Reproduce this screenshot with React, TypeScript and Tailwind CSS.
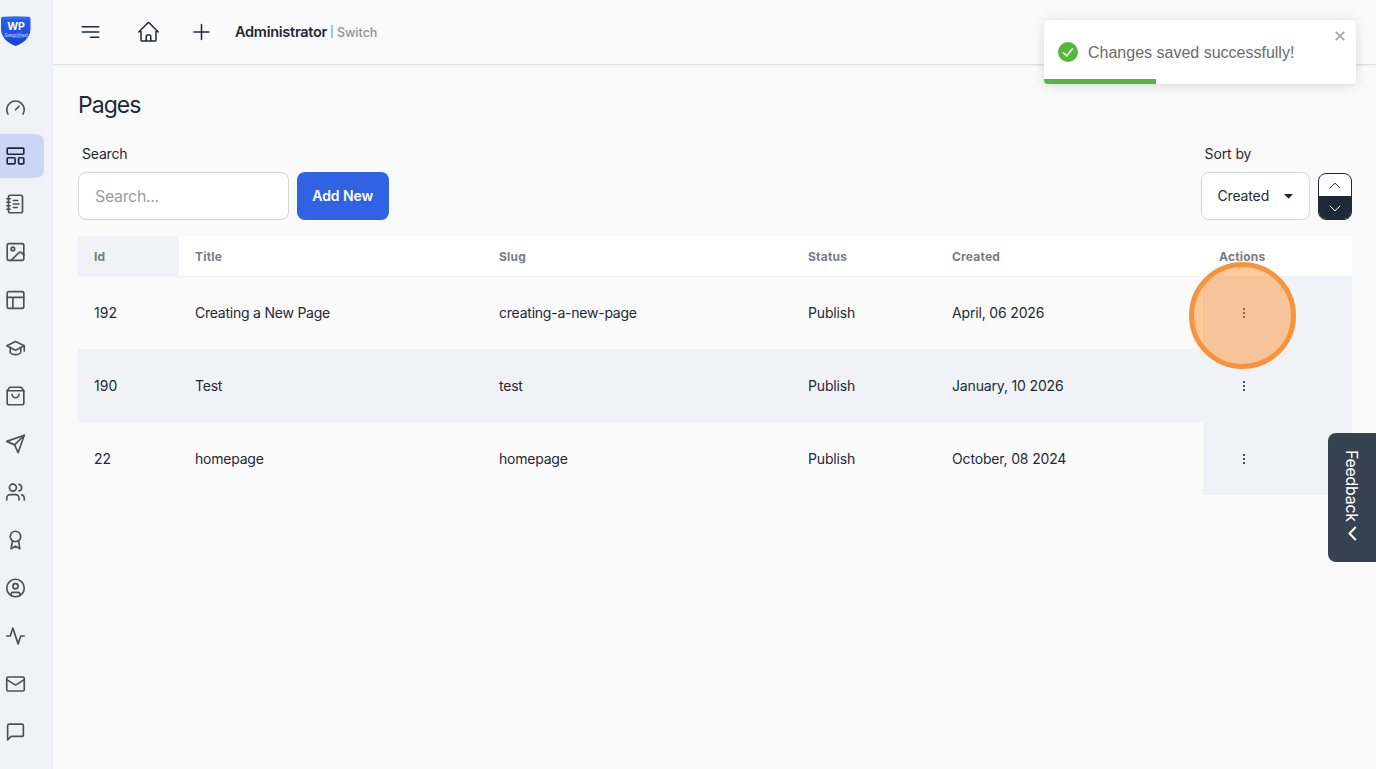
import type { ReactNode } from "react";

const navIcons: ReactNode[] = [
  <>
    <path d="m12 14 4-4" />
    <path d="M3.34 19a10 10 0 1 1 17.32 0" />
  </>,
  <>
    <rect x="2.5" y="3" width="19" height="7" rx="1" />
    <rect x="2.5" y="14" width="9" height="7" rx="1" />
    <rect x="15.5" y="14" width="6" height="7" rx="1" />
  </>,
  <>
    <path d="M2 6h4M2 10h4M2 14h4M2 18h4" />
    <rect x="4" y="2" width="16" height="20" rx="2" />
    <path d="M9.5 8h5M9.5 12H16M9.5 16H14" />
  </>,
  <>
    <rect x="2.5" y="2.5" width="19" height="19" rx="2" />
    <circle cx="9" cy="8.5" r="2" />
    <path d="m21.5 15.5-2.6-2.8a2 2 0 0 0-3 0L7 21.5" />
  </>,
  <>
    <rect x="2.5" y="2.5" width="19" height="19" rx="2" />
    <path d="M2.5 9h19M9 21.5V9" />
  </>,
  <>
    <path d="M12 4.5 2 9.5l10 5 10-5-10-5Z" />
    <path d="M22 9.500v6" />
    <path d="M6 11.500v5c0 1.700 3 3 6 3s6-1.300 6-3v-5" />
  </>,
  <>
    <path d="M5.500 2 2.500 6v14a2 2 0 0 0 2 2h15a2 2 0 0 0 2-2V6l-3-4Z" />
    <path d="M2.500 6h19M16 10a4 4 0 0 1-8 0" />
  </>,
  <>
    <path d="m22 2-7 20-4-9-9-4Z" />
    <path d="M22 2 11 13" />
  </>,
  <>
    <path d="M16 21v-2a4 4 0 0 0-4-4H6a4 4 0 0 0-4 4v2" />
    <circle cx="9" cy="7" r="4" />
    <path d="M22 21v-2a4 4 0 0 0-3-3.870M16 3.130a4 4 0 0 1 0 7.750" />
  </>,
  <>
    <circle cx="12" cy="8" r="6" />
    <path d="M15.477 12.890 17 22l-5-3-5 3 1.523-9.110" />
  </>,
  <>
    <circle cx="12" cy="12" r="10" />
    <circle cx="12" cy="10" r="3" />
    <path d="M7 20.662V19a2 2 0 0 1 2-2h6a2 2 0 0 1 2 2v1.662" />
  </>,
  <path d="M22 12h-4l-3 9L9 3l-3 9H2" />,
  <>
    <rect x="2" y="4" width="20" height="16" rx="1.500" />
    <path d="m22 7-8.970 5.700a1.940 1.940 0 0 1-2.060 0L2 7" />
  </>,
  <path d="M21 15a2 2 0 0 1-2 2H7l-4 4V5a2 2 0 0 1 2-2h14a2 2 0 0 1 2 2z" />,
];

const rows = [
  { id: "192", title: "Creating a New Page", slug: "creating-a-new-page", created: "April, 06 2026" },
  { id: "190", title: "Test", slug: "test", created: "January, 10 2026" },
  { id: "22", title: "homepage", slug: "homepage", created: "October, 08 2024" },
];

const columns = "grid grid-cols-[101px_304px_309px_144px_267px_149px]";

function TopIcon({ d }: { d: string }) {
  return (
    <svg className="size-6 shrink-0" viewBox="-0.5 0 24 24" fill="none" stroke="currentColor" strokeWidth="1.5" strokeLinecap="round" strokeLinejoin="round">
      <path d={d} />
    </svg>
  );
}

function Logo() {
  return (
    <div className="relative mt-4 h-[30px] w-[31px]">
      <svg className="absolute inset-0 h-[30px] w-[31px]" viewBox="0 0 31 30">
        <defs>
          <linearGradient id="shield" x1="0" y1="0" x2="0" y2="1">
            <stop offset="0" stopColor="#3b70ee" />
            <stop offset="0.15" stopColor="#235df0" />
            <stop offset="1" stopColor="#1742d0" />
          </linearGradient>
        </defs>
        <path d="M1 2.200Q1.300 1 3 .8Q15.500-.4 28.500.8Q30.400 1 30.500 2.500V13C30.500 21 24 27 15.600 30C7.500 27 1 21 1 13Z" fill="url(#shield)" />
        <path d="M5 20Q10 18.500 15 21T26 20" fill="none" stroke="#5c86ef" strokeWidth=".7" />
      </svg>
      <div className="absolute left-0 top-[6px] flex w-[31px] flex-col items-center pl-px text-white">
        <span className="text-[10.5px] font-bold leading-[10px]">WP</span>
        <span className="mt-px text-[5px] font-medium leading-[5px] text-[#b5caff]">Simplified</span>
      </div>
    </div>
  );
}

function Sidebar() {
  return (
    <aside className="flex w-[53px] shrink-0 flex-col border-r border-[#eaecf1] bg-[#f1f2f8]">
      <Logo />
      <nav className="mt-10 flex flex-col gap-1">
        {navIcons.map((icon, i) => (
          <a key={i} className={i === 1 ? "flex h-11 w-11 items-center rounded-r-lg bg-[#cbd6f5] pl-[5px] text-[#1f2937]" : "flex h-11 w-11 items-center pl-[5px] text-[#4b5059]"}>
            <svg className="size-[22px]" viewBox="0 -0.57 25.14 25.14" fill="none" stroke="currentColor" strokeWidth="1.9" strokeLinecap="round" strokeLinejoin="round">
              {icon}
            </svg>
          </a>
        ))}
      </nav>
    </aside>
  );
}

function Toast() {
  return (
    <div className="absolute left-[1044px] top-5 flex h-16 w-[312px] items-center overflow-hidden rounded bg-white pl-[14px] shadow-[0_1px_10px_rgba(0,0,0,0.1),0_2px_15px_rgba(0,0,0,0.05)]">
      <svg className="size-5" viewBox="0 0 20 20">
        <circle cx="10" cy="10" r="10" fill="#54b93a" />
        <path d="m5 10.500 3.700 3.400 6.100-7.600" fill="none" stroke="white" strokeWidth="1.500" />
      </svg>
      <span className="ml-[10px] pt-px font-['Liberation_Sans',sans-serif] text-base text-[#6b6b6b]">Changes saved successfully!</span>
      <svg className="absolute right-[11px] top-[11px] size-[10px]" viewBox="0 0 10 10">
        <path d="m.8.800 8.400 8.400M9.200.800.800 9.200" stroke="#a7a7a7" strokeWidth="1.800" />
      </svg>
      <div className="absolute bottom-0 left-0 h-[5px] w-[112px] bg-[#54b93a]" />
    </div>
  );
}

export default function App() {
  return (
    <div className="relative flex h-[769px] w-[1376px] overflow-hidden bg-[#fafafa] font-['Inter',sans-serif] text-sm text-[#1f2937]">
      <Sidebar />
      <div className="flex min-w-0 flex-1 flex-col">
        <header className="flex h-[65px] shrink-0 items-center border-b border-[#e0e1e3] pl-[25px] shadow-[0_1px_2px_rgba(0,0,0,0.06)]">
          <TopIcon d="M3.750 6.750h16.500M3.750 12h16.500M12 17.250h8.250" />
          <div className="ml-[34px]"><TopIcon d="m2.250 12 8.954-8.955c.440-.439 1.152-.439 1.591 0L21.750 12M4.500 9.750v10.125c0 .621.504 1.125 1.125 1.125H9.750v-4.875c0-.621.504-1.125 1.125-1.125h2.250c.621 0 1.125.504 1.125 1.125V21h4.125c.621 0 1.125-.504 1.125-1.125V9.750M8.250 21h8.250" /></div>
          <div className="ml-[29px]"><TopIcon d="M12 4.500v15m7.500-7.500h-15" /></div>
          <span className="ml-[22px] text-[14.500px] font-semibold tracking-[-0.26px]">Administrator</span>
          <span className="ml-[3px] flex items-center gap-[3px] pt-px text-[12.500px] font-medium text-[#8d9197]"><span className="text-[11px]">|</span>Switch</span>
        </header>
        <main className="flex flex-col pl-[25px] pr-6">
          <h1 className="mt-6 text-[23px] leading-8 tracking-[-0.95px]">Pages</h1>
          <div className="mt-[23px] flex items-end justify-between">
            <div>
              <label className="block pl-1 leading-5 tracking-[-0.2px]">Search</label>
              <div className="mt-2 flex gap-2">
                <input className="h-12 w-[210.500px] rounded-lg border border-[#d4d5d8] bg-white px-4 text-base tracking-[-0.35px] outline-none placeholder:text-[#9a9ea5]" placeholder="Search..." />
                <button className="h-12 w-[92.500px] rounded-lg bg-[#3063e3] text-sm font-semibold tracking-[-0.050px] text-white">Add New</button>
              </div>
            </div>
            <div>
              <label className="block pl-1 leading-5 tracking-[-0.1px]">Sort by</label>
              <div className="mt-2 flex items-center gap-2">
                <button className="flex h-12 w-[109.500px] items-center justify-between rounded-lg border border-[#d4d5d8] bg-white px-4 tracking-[-0.15px]">
                  Created
                  <svg className="h-[5px] w-[9px]" viewBox="0 0 9 5"><path d="M0 0h9L4.500 4.700Z" fill="currentColor" /></svg>
                </button>
                <div className="mt-px flex h-[47px] w-[34px] flex-col overflow-hidden rounded-lg border border-[#1f2937] bg-white">
                  <button className="flex h-[22px] items-center justify-center">
                    <svg className="h-[7px] w-3" viewBox="0 0 12 7"><path d="m.8 6.200 5.200-5 5.200 5" fill="none" stroke="currentColor" /></svg>
                  </button>
                  <button className="flex flex-1 items-center justify-center bg-[#1f2937] pt-px text-white">
                    <svg className="h-[7px] w-3" viewBox="0 0 12 7"><path d="m.8.800 5.200 5 5.200-5" fill="none" stroke="currentColor" /></svg>
                  </button>
                </div>
              </div>
            </div>
          </div>
          <div className="mt-4 flex w-[1274px] flex-col">
            <div className={`${columns} h-[41px] items-stretch border-b border-[#f1f2f5] bg-white text-xs font-bold tracking-[0.2px] text-[#777c84]`}>
              <div className="flex items-center bg-[#f1f2f8] pl-4 pt-px">Id</div>
              <div className="flex items-center pl-4 pt-px">Title</div>
              <div className="flex items-center pl-4 pt-px">Slug</div>
              <div className="flex items-center pl-4 pt-px">Status</div>
              <div className="flex items-center pl-4 pt-px">Created</div>
              <div className="flex items-center pl-4 pt-px">Actions</div>
            </div>
            <div className="-mt-px flex flex-col">
              {rows.map((row, i) => (
                <div key={row.id} className={i === 1 ? `${columns} h-[73px] bg-[#f1f2f8]` : `${columns} h-[73px]`}>
                  <div className="flex items-center pl-4">{row.id}</div>
                  <div className="flex items-center pl-4 tracking-[-0.23px]">{row.title}</div>
                  <div className="flex items-center pl-4 tracking-[-0.23px]">{row.slug}</div>
                  <div className="flex items-center pl-4 tracking-[-0.15px]">Publish</div>
                  <div className="flex items-center pl-4 tracking-[-0.16px]">{row.created}</div>
                  <div className="flex items-center bg-[#f1f2f8] pl-[39px]">
                    <svg className="h-3 w-1" viewBox="0 0 4 12" fill="#494f59"><path d="M1 1h2v2H1ZM1 5h2v2H1ZM1 9h2v2H1Z" /></svg>
                  </div>
                </div>
              ))}
            </div>
          </div>
        </main>
      </div>
      <div className="absolute left-[1189px] top-[262px] size-[107px] rounded-full border-[5.500px] border-[#f8933c] bg-[#ff8316]/42" />
      <button className="absolute left-[1328px] top-[433px] flex h-[128.500px] w-12 items-center gap-1 rounded-l-lg bg-[#364152] pt-[17px] text-base tracking-[-0.3px] text-white [writing-mode:vertical-rl]">
        Feedback
        <svg className="h-[15px] w-[9px]" viewBox="0 0 9 15"><path d="M7.800 1 1.500 7.500 7.800 14" fill="none" stroke="currentColor" strokeWidth="2" /></svg>
      </button>
      <Toast />
    </div>
  );
}
